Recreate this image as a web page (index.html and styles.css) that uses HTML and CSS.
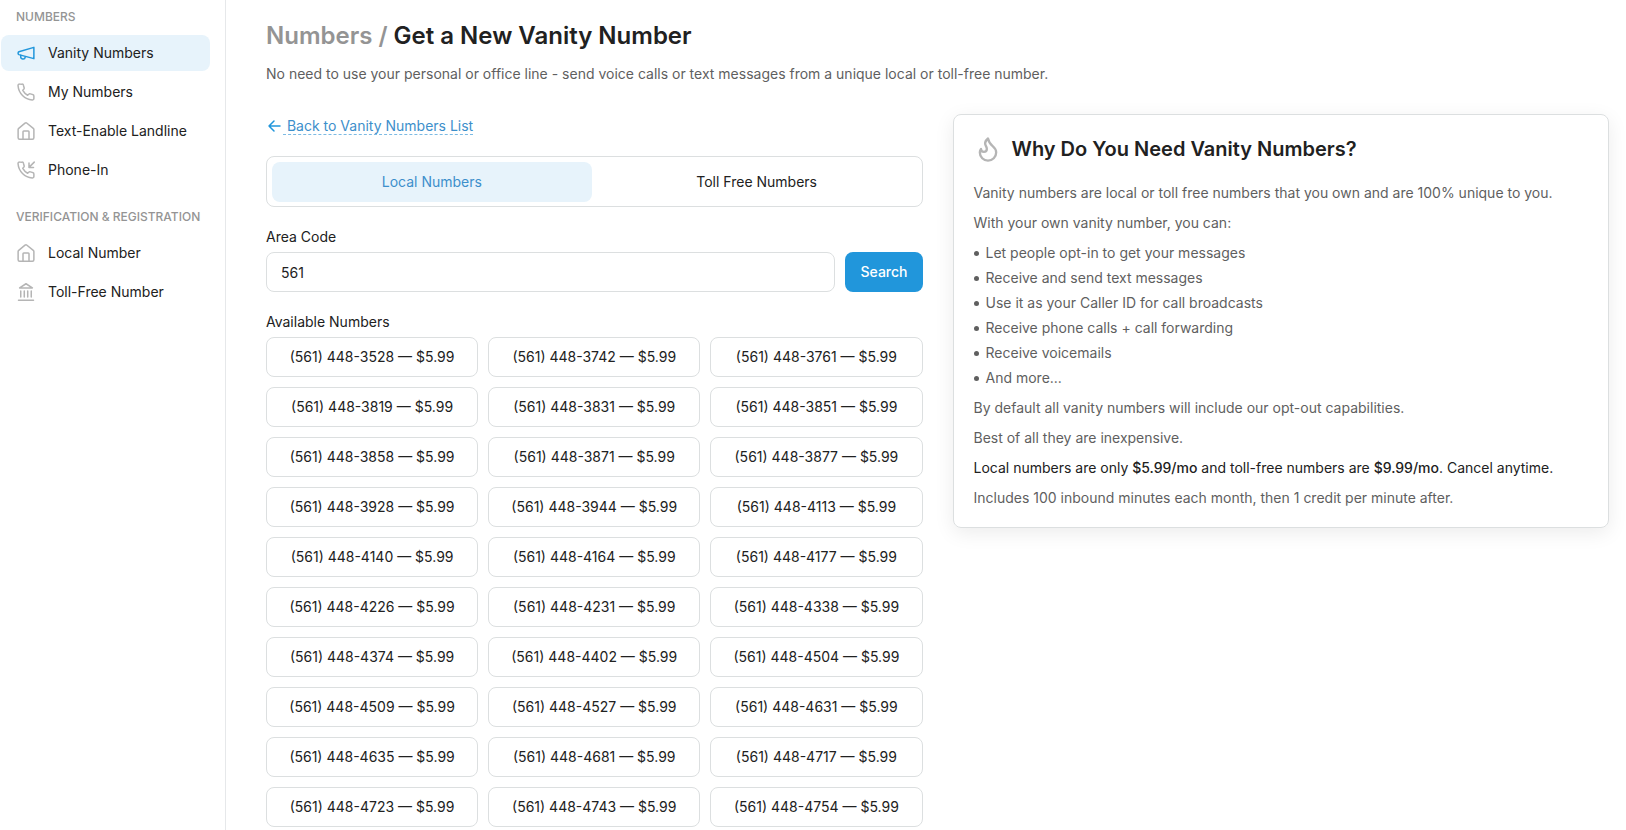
FILE: index.html
```html
<!DOCTYPE html>
<html lang="en">
<head>
    <meta charset="UTF-8">
    <meta name="viewport" content="width=device-width, initial-scale=1.0">
    <title>Get a New Vanity Number</title>
    <link rel="stylesheet" href="styles.css">
</head>
<body>
    <div class="layout">
        <nav class="sidebar">
            <h2 class="nav-title">Numbers</h2>
            <ul class="nav-list">
                <li>
                    <a href="#" class="nav-link active">
                        <svg class="icon" viewBox="0 0 24 24"><path d="M22.500 4.500v15L2.500 14.200c-1.400-.6-1.400-3.200 0-3.800z"/><path d="M5 15v1.500a3 3 0 0 0 6 1"/></svg>
                        Vanity Numbers
                    </a>
                </li>
                <li>
                    <a href="#" class="nav-link">
                        <svg class="icon" viewBox="0 0 24 24"><path d="M22.500 17.400v3.200a2 2 0 0 1-2.200 2A20.500 20.500 0 0 1 1.400 3.700a2 2 0 0 1 2-2.200h3.300a2 2 0 0 1 2 1.700c.2 1 .4 2 .8 3a2 2 0 0 1-.5 2.200L7.700 9.800a16.500 16.500 0 0 0 6.500 6.500l1.400-1.300a2 2 0 0 1 2.200-.5c1 .4 2 .6 3 .8a2 2 0 0 1 1.700 2.100z"/></svg>
                        My Numbers
                    </a>
                </li>
                <li>
                    <a href="#" class="nav-link">
                        <svg class="icon" viewBox="0 0 24 24"><path d="M2.300 8.500 10.700 1.600a2 2 0 0 1 2.600 0l8.400 6.900c.5.400.8 1 .8 1.600V21a2 2 0 0 1-2 2h-17a2 2 0 0 1-2-2V10.100c0-.6.300-1.200.8-1.600z"/><path d="M8 23V13a1 1 0 0 1 1-1h6a1 1 0 0 1 1 1v10"/></svg>
                        Text-Enable Landline
                    </a>
                </li>
                <li>
                    <a href="#" class="nav-link">
                        <svg class="icon" viewBox="0 0 24 24"><path d="M22.500 17.400v3.200a2 2 0 0 1-2.200 2A20.500 20.500 0 0 1 1.400 3.700a2 2 0 0 1 2-2.200h3.300a2 2 0 0 1 2 1.700c.2 1 .4 2 .8 3a2 2 0 0 1-.5 2.200L7.700 9.800a16.500 16.500 0 0 0 6.500 6.500l1.400-1.300a2 2 0 0 1 2.200-.5c1 .4 2 .6 3 .8a2 2 0 0 1 1.700 2.100z"/><path d="M23 1.500 16 8.500M16 2.500v6h6"/></svg>
                        Phone-In
                    </a>
                </li>
            </ul>
            <h2 class="nav-title">Verification &amp; Registration</h2>
            <ul class="nav-list">
                <li>
                    <a href="#" class="nav-link">
                        <svg class="icon" viewBox="0 0 24 24"><path d="M2.300 8.500 10.700 1.600a2 2 0 0 1 2.600 0l8.400 6.900c.5.400.8 1 .8 1.600V21a2 2 0 0 1-2 2h-17a2 2 0 0 1-2-2V10.100c0-.6.300-1.200.8-1.600z"/><path d="M8 23V13a1 1 0 0 1 1-1h6a1 1 0 0 1 1 1v10"/></svg>
                        Local Number
                    </a>
                </li>
                <li>
                    <a href="#" class="nav-link">
                        <svg class="icon" viewBox="0 0 24 24"><path d="M3.500 6.500 12 1l8.500 5.500zM5 10.500v8M9.700 10.500v8M14.300 10.500v8M19 10.500v8M2 23h20"/></svg>
                        Toll-Free Number
                    </a>
                </li>
            </ul>
        </nav>
        <main>
            <h1><span class="crumb">Numbers /</span> Get a New Vanity Number</h1>
            <p class="intro">No need to use your personal or office line - send voice calls or text messages from a unique local or toll-free number.</p>
            <div class="columns">
                <section class="picker">
                    <a href="#" class="back-link">
                        <svg class="back-icon" viewBox="0 0 16 16"><path d="M14 8H3M8 3 3 8l5 5"/></svg>
                        <span class="back-text">&nbsp;Back to Vanity Numbers List</span>
                    </a>
                    <div class="tabs">
                        <button type="button" class="tab active">Local Numbers</button>
                        <button type="button" class="tab">Toll Free Numbers</button>
                    </div>
                    <label class="field-label" for="areaCode">Area Code</label>
                    <div class="search-row">
                        <input type="text" id="areaCode" value="561">
                        <button type="button" class="search-btn">Search</button>
                    </div>
                    <h2 class="field-label">Available Numbers</h2>
                    <div class="number-grid">
                        <button type="button">(561) 448-3528 — $5.99</button>
                        <button type="button">(561) 448-3742 — $5.99</button>
                        <button type="button">(561) 448-3761 — $5.99</button>
                        <button type="button">(561) 448-3819 — $5.99</button>
                        <button type="button">(561) 448-3831 — $5.99</button>
                        <button type="button">(561) 448-3851 — $5.99</button>
                        <button type="button">(561) 448-3858 — $5.99</button>
                        <button type="button">(561) 448-3871 — $5.99</button>
                        <button type="button">(561) 448-3877 — $5.99</button>
                        <button type="button">(561) 448-3928 — $5.99</button>
                        <button type="button">(561) 448-3944 — $5.99</button>
                        <button type="button">(561) 448-4113 — $5.99</button>
                        <button type="button">(561) 448-4140 — $5.99</button>
                        <button type="button">(561) 448-4164 — $5.99</button>
                        <button type="button">(561) 448-4177 — $5.99</button>
                        <button type="button">(561) 448-4226 — $5.99</button>
                        <button type="button">(561) 448-4231 — $5.99</button>
                        <button type="button">(561) 448-4338 — $5.99</button>
                        <button type="button">(561) 448-4374 — $5.99</button>
                        <button type="button">(561) 448-4402 — $5.99</button>
                        <button type="button">(561) 448-4504 — $5.99</button>
                        <button type="button">(561) 448-4509 — $5.99</button>
                        <button type="button">(561) 448-4527 — $5.99</button>
                        <button type="button">(561) 448-4631 — $5.99</button>
                        <button type="button">(561) 448-4635 — $5.99</button>
                        <button type="button">(561) 448-4681 — $5.99</button>
                        <button type="button">(561) 448-4717 — $5.99</button>
                        <button type="button">(561) 448-4723 — $5.99</button>
                        <button type="button">(561) 448-4743 — $5.99</button>
                        <button type="button">(561) 448-4754 — $5.99</button>
                    </div>
                </section>
                <aside class="info-card">
                    <h2 class="info-title">
                        <svg class="info-icon" viewBox="0 0 24 24"><path d="M8.500 14.500A2.500 2.500 0 0 0 11 12c0-1.380-.5-2-1-3-1.072-2.143-.224-4.054 2-6 .5 2.500 2 4.900 4 6.500 2 1.600 3 3.500 3 5.500a7 7 0 1 1-14 0c0-1.153.433-2.294 1-3a2.500 2.500 0 0 0 2.500 2.500z"/></svg>
                        Why Do You Need Vanity Numbers?
                    </h2>
                    <p>Vanity numbers are local or toll free numbers that you own and are 100% unique to you.</p>
                    <p>With your own vanity number, you can:</p>
                    <ul class="info-list">
                        <li>Let people opt-in to get your messages</li>
                        <li>Receive and send text messages</li>
                        <li>Use it as your Caller ID for call broadcasts</li>
                        <li>Receive phone calls + call forwarding</li>
                        <li>Receive voicemails</li>
                        <li>And more...</li>
                    </ul>
                    <p>By default all vanity numbers will include our opt-out capabilities.</p>
                    <p>Best of all they are inexpensive.</p>
                    <p class="pricing">Local numbers are only <strong>$5.99/mo</strong> and toll-free numbers are <strong>$9.99/mo</strong>. Cancel anytime.</p>
                    <p>Includes 100 inbound minutes each month, then 1 credit per minute after.</p>
                </aside>
            </div>
        </main>
    </div>
</body>
</html>
```
FILE: styles.css
```css
* {
    box-sizing: border-box;
}
body {
    margin: 0;
    font-family: Inter, sans-serif;
    font-size: 14px;
    line-height: 20px;
    color: #212121;
    background-color: #fff;
}
h1, h2, p, ul {
    margin: 0;
    padding: 0;
}
ul {
    list-style: none;
}
button, input {
    font: inherit;
    color: inherit;
}
button {
    cursor: pointer;
}
svg {
    fill: none;
    stroke: currentColor;
    stroke-linecap: round;
    stroke-linejoin: round;
    flex-shrink: 0;
}
.layout {
    display: flex;
    height: 100vh;
    overflow: hidden;
}

/* Sidebar */
.sidebar {
    width: 226px;
    flex-shrink: 0;
    padding: 7px 15px 0 1px;
    border-right: 1px solid #e6e8ea;
}
.nav-title {
    padding-left: 15px;
    margin-bottom: 8px;
    font-size: 12px;
    font-weight: 500;
    white-space: nowrap;
    text-transform: uppercase;
    color: #949494;
}
.nav-list {
    display: flex;
    flex-direction: column;
    gap: 3px;
    margin-bottom: 19px;
}
.nav-link {
    display: flex;
    align-items: center;
    gap: 13px;
    height: 36px;
    padding: 0 16px;
    border-radius: 8px;
    color: #212121;
    text-decoration: none;
}
.nav-link.active {
    background-color: #e7f3fb;
}
.icon {
    width: 18px;
    height: 18px;
    stroke-width: 2;
    color: #b5b5b5;
}
.active .icon {
    color: #2196db;
}

/* Page content */
main {
    flex: 1;
    padding: 20px 17px 0 40px;
}
h1 {
    font-size: 24px;
    font-weight: 600;
    line-height: 32px;
}
.crumb {
    color: #949494;
}
.intro {
    margin-top: 12px;
    color: #5f5f5f;
}
.columns {
    display: grid;
    grid-template-columns: 1fr 1fr;
    align-items: start;
    gap: 30px;
    margin-top: 30px;
}
.back-link {
    display: flex;
    align-items: center;
    gap: 1px;
    height: 22px;
    margin-bottom: 20px;
    padding-top: 2px;
    color: #3d8fcb;
    text-decoration: none;
}
.back-icon {
    width: 16px;
    height: 16px;
    stroke-width: 1.5;
    color: #2196db;
}
.back-text {
    line-height: 16px;
    border-bottom: 1px dashed #7dbbe4;
}
.tabs {
    display: flex;
    gap: 5px;
    padding: 5px 5px 4px;
    border: 1px solid #dcdfe0;
    border-radius: 8px;
}
.tab {
    flex: 1;
    height: 40px;
    border: none;
    border-radius: 8px;
    background: none;
}
.tab.active {
    background-color: #e7f3fb;
    color: #3d8fcb;
}
.field-label {
    display: block;
    margin: 20px 0 5px;
    font-size: 14px;
    font-weight: 400;
}
.search-row {
    display: flex;
    gap: 10px;
}
.search-row input {
    flex: 1;
    height: 40px;
    padding: 0 14px;
    border: 1px solid #dcdfe0;
    border-radius: 8px;
}
.search-btn {
    height: 40px;
    padding: 0 15px;
    border: none;
    border-radius: 8px;
    background-color: #2196db;
    color: #fff;
    font-weight: 500;
}
.number-grid {
    display: grid;
    grid-template-columns: repeat(3, 1fr);
    gap: 10px;
}
.number-grid button {
    height: 40px;
    padding: 0;
    border: 1px solid #dcdfe0;
    border-radius: 8px;
    background-color: #fff;
}

/* Info card */
.info-card {
    padding: 20px 20px 19px;
    border: 1px solid #dcdfe0;
    border-radius: 8px;
    box-shadow: 0 5px 20px rgba(0, 0, 0, 0.08);
    color: #5f5f5f;
}
.info-title {
    display: flex;
    align-items: center;
    gap: 10px;
    margin-bottom: 20px;
    font-size: 20px;
    font-weight: 600;
    line-height: 28px;
    color: #212121;
}
.info-icon {
    width: 28px;
    height: 28px;
    stroke-width: 2;
    color: #b5b5b5;
}
.info-card p + p, .info-list, .info-list + p {
    margin-top: 10px;
}
.info-list li {
    display: flex;
    align-items: center;
    gap: 7px;
}
.info-list li + li {
    margin-top: 5px;
}
.info-list li::before {
    content: "";
    width: 5px;
    height: 5px;
    border-radius: 50%;
    background-color: #5f5f5f;
}
.info-card .pricing {
    color: #212121;
}
.pricing strong {
    font-weight: 500;
}
```
